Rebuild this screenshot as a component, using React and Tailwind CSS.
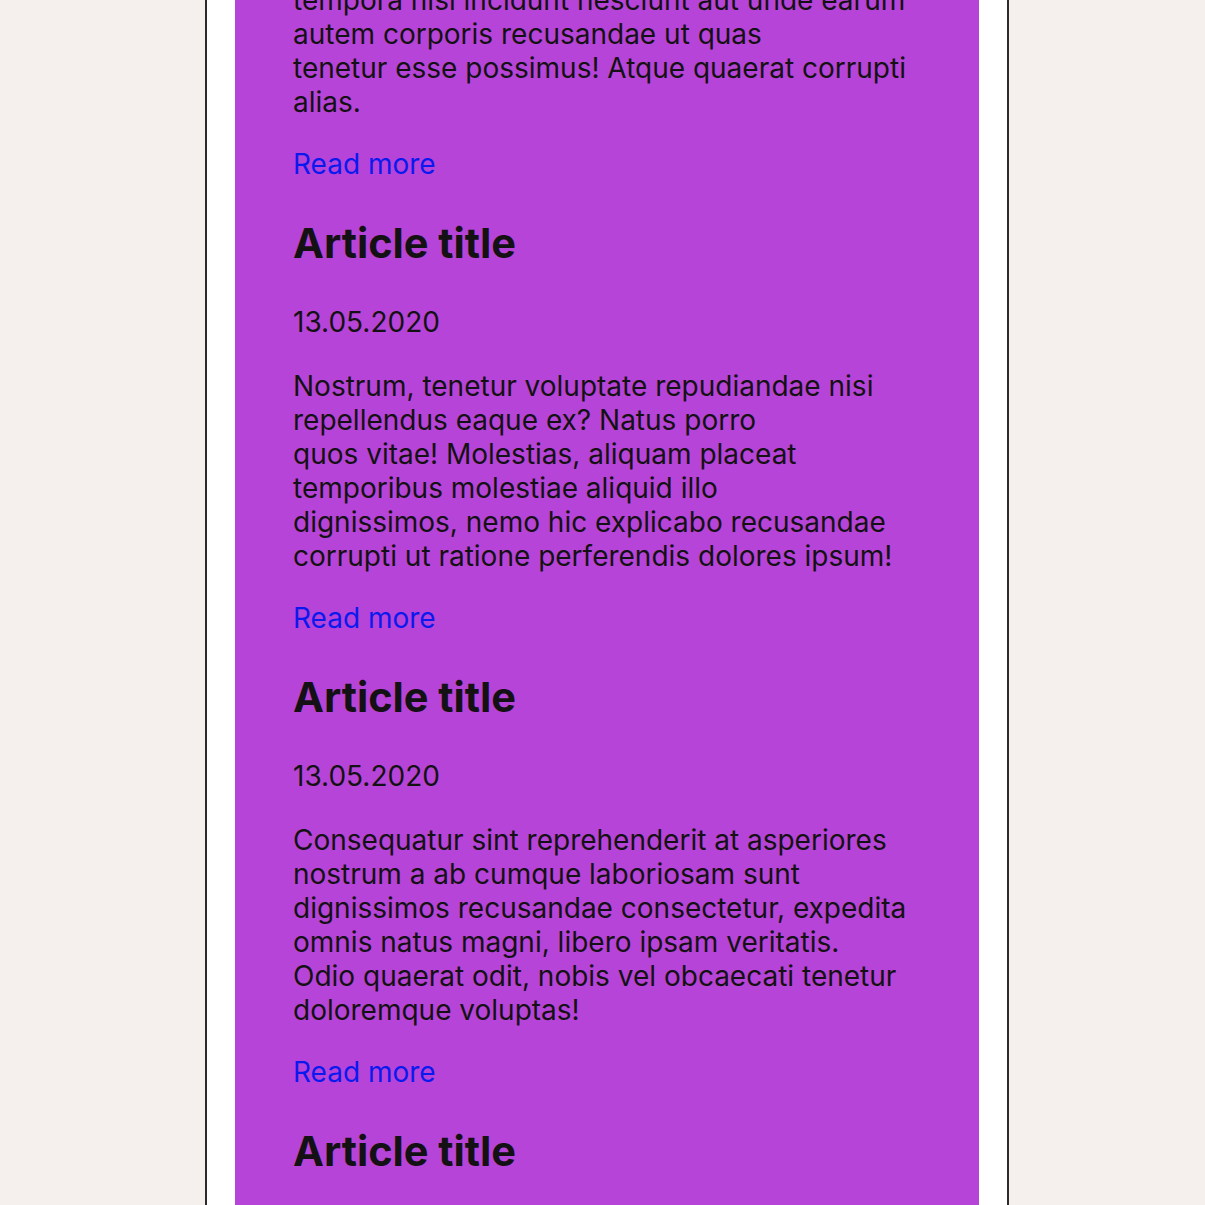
import React from 'react';

const articles = [
  {
    title: 'Article title',
    date: '13.05.2020',
    lines: [
      'Lorem ipsum dolor sit amet consectetur',
      'adipisicing elit. Quibusdam voluptates fugiat',
      'tempora nisi incidunt nesciunt aut unde earum',
      'autem corporis recusandae ut quas',
      'tenetur esse possimus! Atque quaerat corrupti',
      'alias.',
    ],
  },
  {
    title: 'Article title',
    date: '13.05.2020',
    lines: [
      'Nostrum, tenetur voluptate repudiandae nisi',
      'repellendus eaque ex? Natus porro',
      'quos vitae! Molestias, aliquam placeat',
      'temporibus molestiae aliquid illo',
      'dignissimos, nemo hic explicabo recusandae',
      'corrupti ut ratione perferendis dolores ipsum!',
    ],
  },
  {
    title: 'Article title',
    date: '13.05.2020',
    lines: [
      'Consequatur sint reprehenderit at asperiores',
      'nostrum a ab cumque laboriosam sunt',
      'dignissimos recusandae consectetur, expedita',
      'omnis natus magni, libero ipsam veritatis.',
      'Odio quaerat odit, nobis vel obcaecati tenetur',
      'doloremque voluptas!',
    ],
  },
  {
    title: 'Article title',
    date: '13.05.2020',
    lines: [
      'Sit amet consectetur adipisicing elit. Eveniet,',
      'cumque. Harum laborum animi nulla tempore',
      'quia fugit, similique doloremque quasi.',
    ],
  },
];

const Article = ({ title, date, lines }) => {
  return (
    <article className="flex flex-col">
      <h2 className="text-[41.5px] leading-[48px] font-bold">{title}</h2>
      <p className="mt-[38px]">{date}</p>
      <p className="mt-[30px] whitespace-nowrap">
        {lines.map((line, i) => (
          <React.Fragment key={i}>
            {i > 0 && <br />}
            {line}
          </React.Fragment>
        ))}
      </p>
      <a href="#" className="mt-[28px] self-start text-[#0a1aee]">
        Read more
      </a>
    </article>
  );
};

const App = () => {
  return (
    <div className="h-[1205px] overflow-hidden bg-[#f5f0ed] font-['Inter',sans-serif] text-[#141114]">
      <div className="ml-[205px] -mt-[235px] w-[804px] border-x-2 border-[#2e2a2a] bg-white px-[28px]">
        <div className="bg-[#b744d8] px-[58px] pb-[200px] text-[28px] leading-[34px]">
          <div className="flex flex-col gap-[38px]">
            {articles.map((a, i) => (
              <Article key={i} {...a} />
            ))}
          </div>
        </div>
      </div>
    </div>
  );
};

export default App;
